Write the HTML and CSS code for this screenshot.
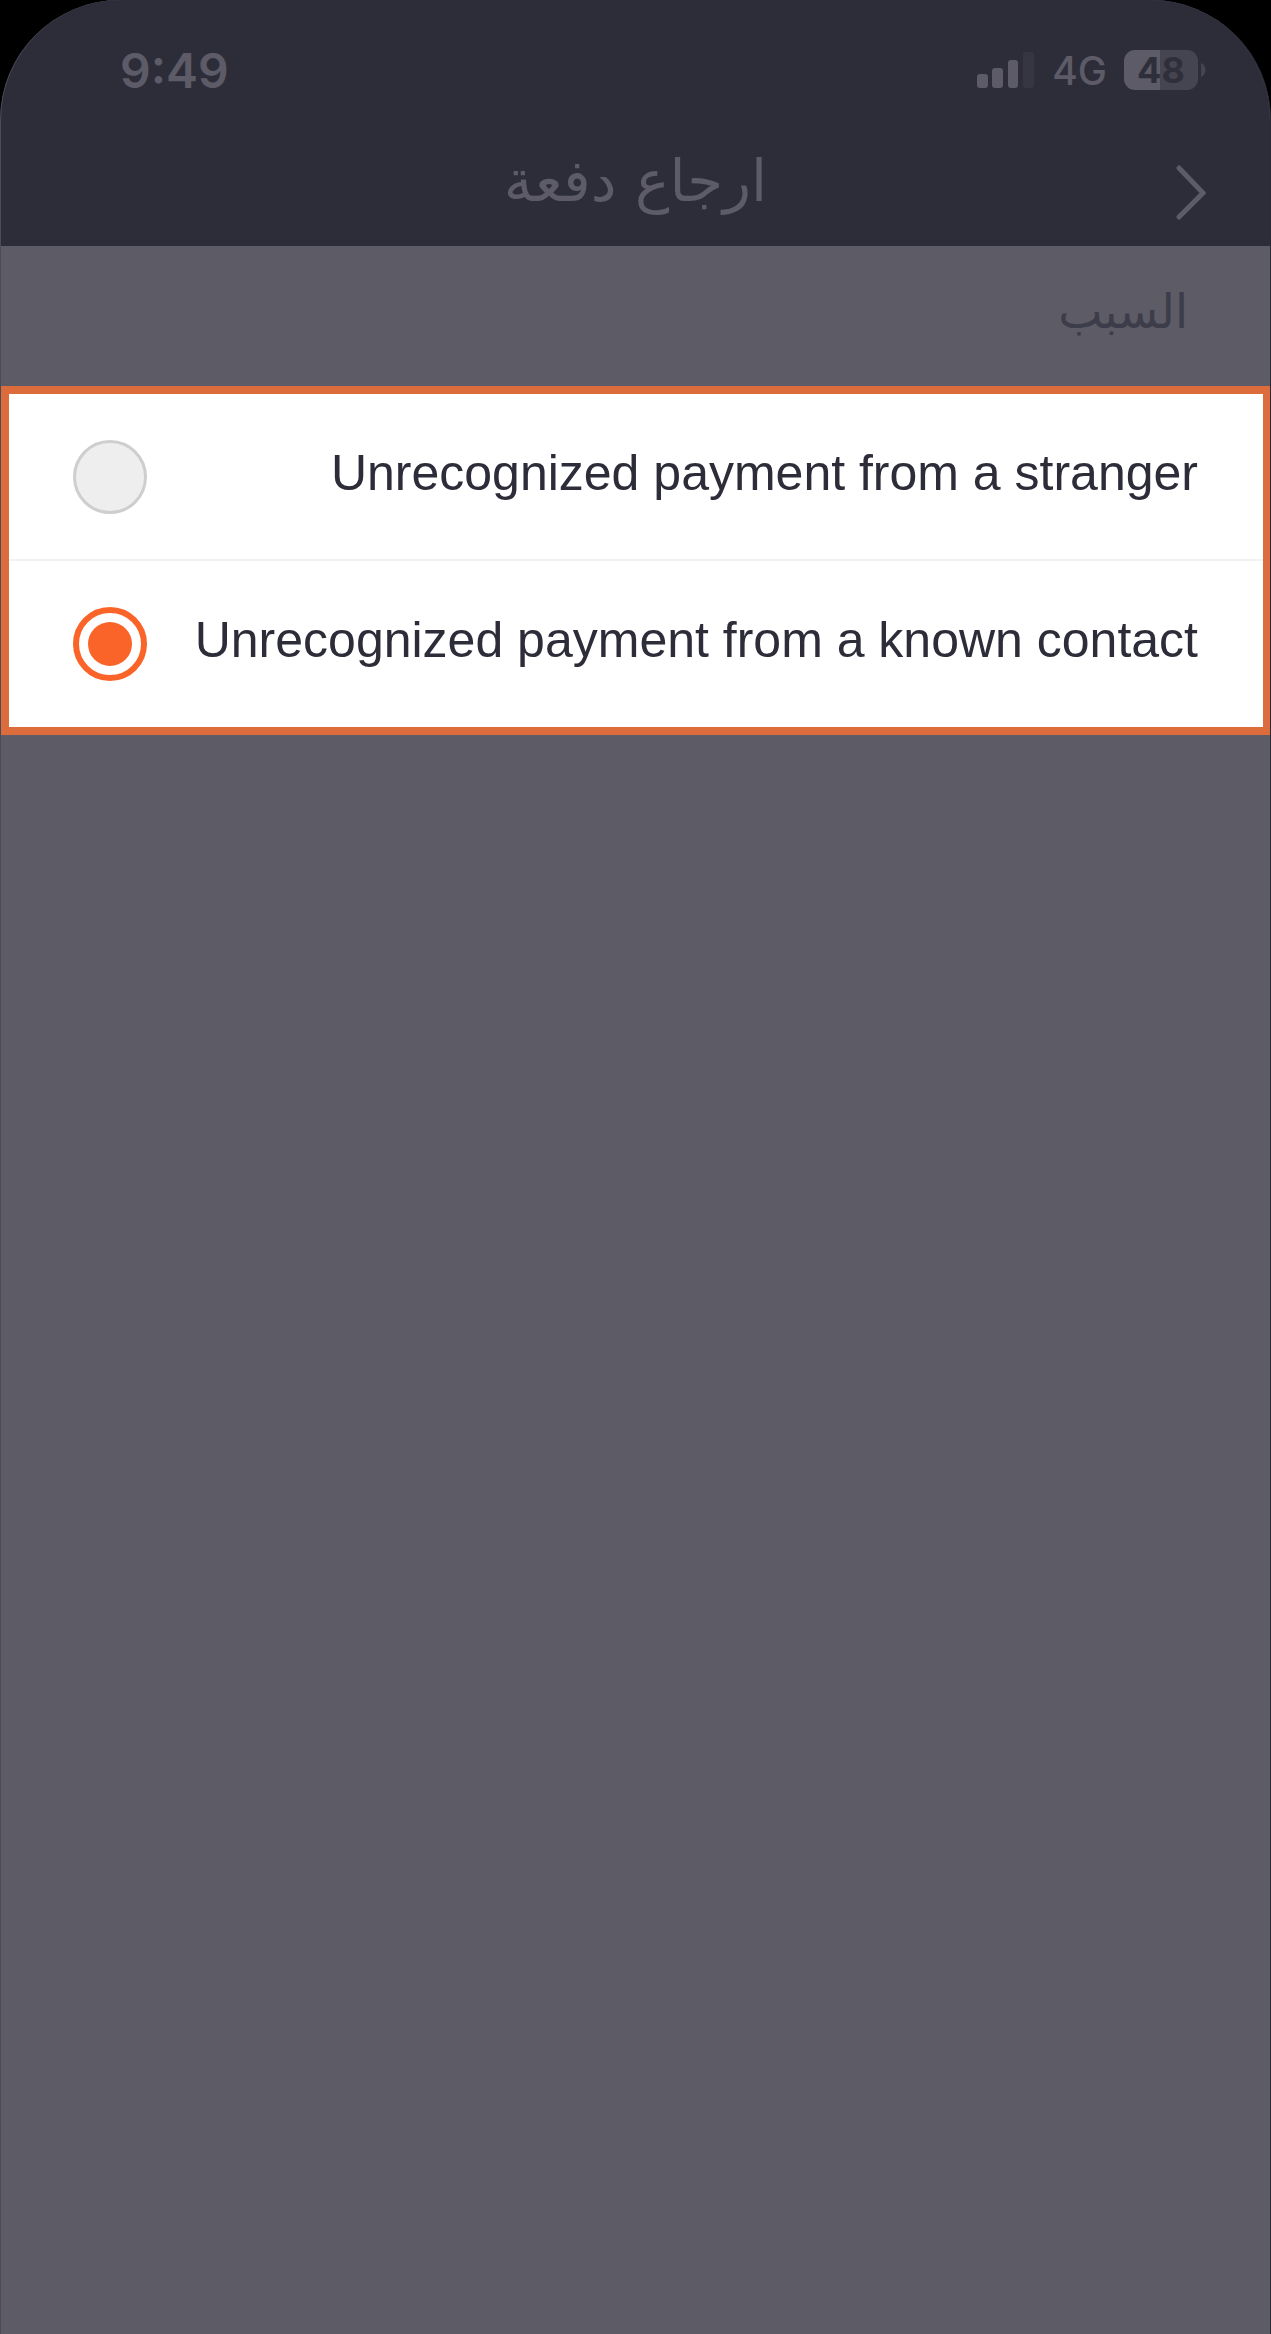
FILE: index.html
```html
<!DOCTYPE html>
<html lang="ar" dir="rtl">
<head>
    <meta charset="UTF-8">
    <meta name="viewport" content="width=device-width, initial-scale=1.0">
    <title>ارجاع دفعة</title>
    <link rel="stylesheet" href="styles.css">
</head>
<body>
    <div class="screen">
        <header class="header">
            <div class="status-bar" dir="ltr">
                <span class="time">9:49</span>
                <div class="status-icons">
                    <svg class="signal" width="58" height="36" viewBox="0 0 58 36" aria-hidden="true">
                        <rect x="0" y="22" width="11" height="14" rx="3"/>
                        <rect x="15" y="16" width="11" height="20" rx="3"/>
                        <rect x="31" y="8" width="10" height="28" rx="3"/>
                        <rect class="signal-off" x="46" y="0" width="11" height="36" rx="3"/>
                    </svg>
                    <span class="network">4G</span>
                    <div class="battery">
                        <span class="battery-level">48</span>
                        <svg width="5" height="14" viewBox="0 0 5 14" aria-hidden="true">
                            <path d="M0 0C6 3 6 11 0 14Z"/>
                        </svg>
                    </div>
                </div>
            </div>
            <div class="title-bar">
                <button class="back" type="button" aria-label="رجوع">
                    <svg width="30" height="56" viewBox="0 0 30 56" aria-hidden="true">
                        <path d="M3 3L27 28L3 52"/>
                    </svg>
                </button>
                <h1>ارجاع دفعة</h1>
            </div>
        </header>

        <main>
            <h2 id="reason">السبب</h2>
            <div class="options" role="radiogroup" aria-labelledby="reason">
                <label class="option" for="stranger">
                    <span>Unrecognized payment from a stranger</span>
                    <input type="radio" id="stranger" name="reason" value="stranger">
                </label>
                <label class="option" for="contact">
                    <span>Unrecognized payment from a known contact</span>
                    <input type="radio" id="contact" name="reason" value="contact" checked>
                </label>
            </div>
        </main>
    </div>
</body>
</html>
```
FILE: styles.css
```css
* {
    box-sizing: border-box;
}
body {
    margin: 0;
    background-color: #000;
    font-family: "Liberation Sans", "DejaVu Sans", sans-serif;
}
.screen {
    min-height: 100vh;
    overflow: hidden;
    border-radius: 120px 120px 0 0;
    border-left: 1px solid #4c4c58;
    border-right: 1px solid #2a2a36;
    background-color: #5c5b66;
}
.header {
    padding-top: 41px;
    background-color: #2d2d3a;
    color: #5c5b67;
}
.status-bar {
    display: flex;
    align-items: center;
    justify-content: space-between;
    height: 58px;
    padding: 0 64px 0 119px;
    font-family: Inter, sans-serif;
}
.time {
    font-size: 48px;
    font-weight: 600;
}
.status-icons {
    display: flex;
    align-items: center;
    gap: 17px;
}
.signal {
    fill: #5c5b67;
}
.signal-off {
    fill: #363643;
}
.network {
    font-size: 39px;
    font-weight: 500;
}
.battery {
    display: flex;
    align-items: center;
    gap: 3px;
    fill: #454551;
}
.battery-level {
    width: 74px;
    border-radius: 11px;
    background: linear-gradient(to right, #5c5b67 48%, #454551 48%);
    color: #2f2f3c;
    font-size: 36px;
    font-weight: 700;
    line-height: 40px;
    text-align: center;
}
.title-bar {
    display: grid;
    grid-template-columns: 1fr auto 1fr;
    align-items: center;
    height: 147px;
    padding: 40px 64px 0;
}
.back {
    justify-self: start;
    display: flex;
    padding: 0;
    border: none;
    background: none;
    cursor: pointer;
}
.back svg {
    fill: none;
    stroke: #5c5b67;
    stroke-width: 5;
    stroke-linecap: round;
}
h1 {
    margin: 0;
    padding-bottom: 24px;
    font-family: "DejaVu Sans", sans-serif;
    font-size: 58px;
    font-weight: 400;
    line-height: 60px;
}
h2 {
    margin: 0;
    padding: 28px 82px 36px;
    color: #3d3c4a;
    font-family: "DejaVu Sans", sans-serif;
    font-size: 47px;
    font-weight: 400;
    line-height: 76px;
}
.options {
    margin-right: -1px;
    border: 8px solid #dd6c3c;
    background-color: #fff;
}
.option {
    display: flex;
    align-items: center;
    justify-content: space-between;
    height: 165px;
    padding: 0 65px 0 64px;
    color: #2d2d3a;
    font-size: 50px;
    cursor: pointer;
}
.option + .option {
    height: 168px;
    border-top: 2px solid #f2f2f3;
}
.option span {
    padding-bottom: 8px;
}
.option input {
    appearance: none;
    display: grid;
    place-items: center;
    flex: none;
    width: 74px;
    height: 74px;
    margin: 0;
    border: 3px solid #cecece;
    border-radius: 50%;
    background-color: #eee;
    cursor: pointer;
}
.option input:checked {
    border: 6px solid #fb6428;
    background-color: #fff;
}
.option input:checked::before {
    content: "";
    width: 44px;
    height: 44px;
    border-radius: 50%;
    background-color: #fb6428;
}
```
